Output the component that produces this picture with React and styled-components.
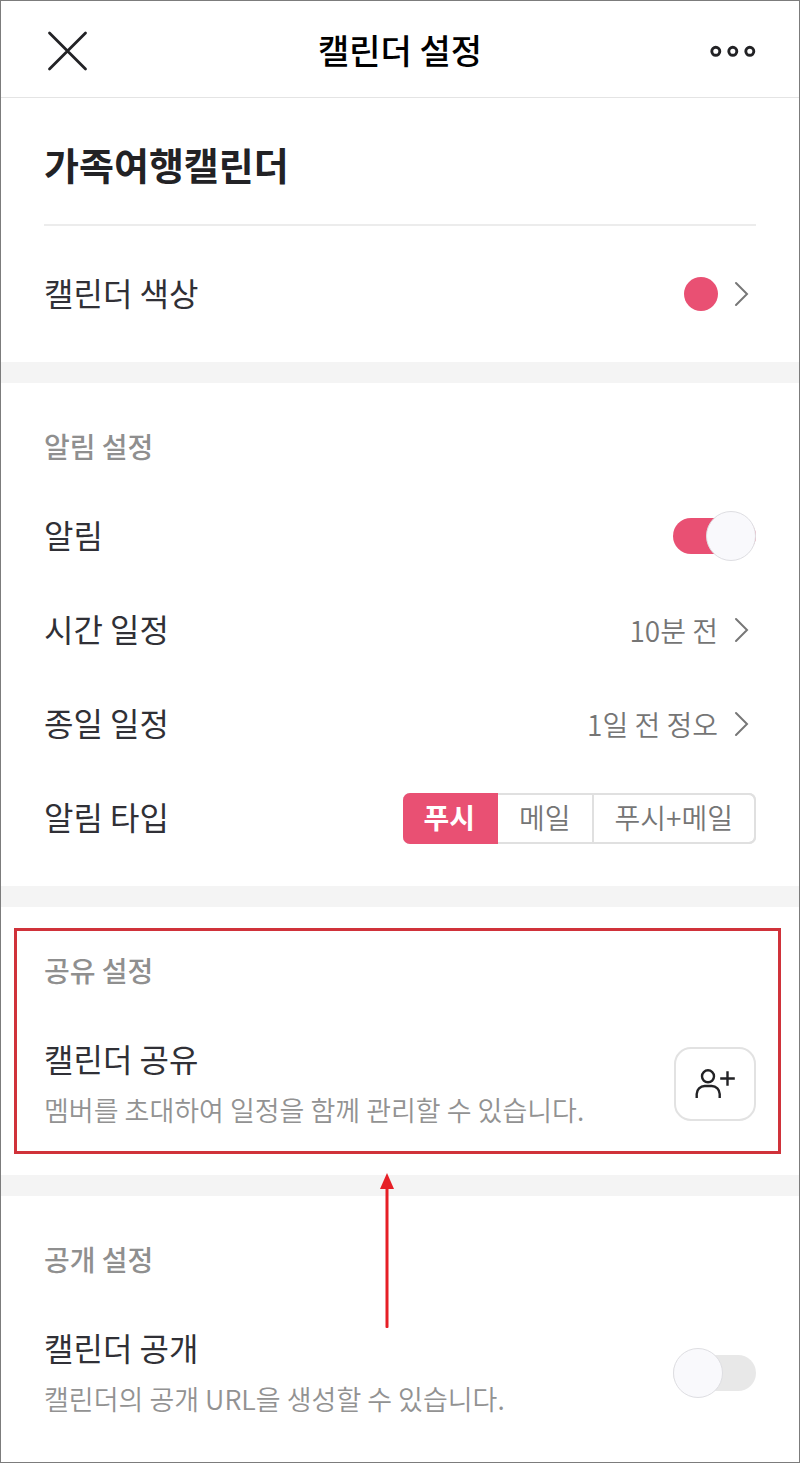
import React, { useState } from 'react';
import styled, { createGlobalStyle } from 'styled-components';

// --- STYLES ---

const GlobalStyle = createGlobalStyle`
    *, *::before {
        box-sizing: border-box;
    }
    body {
        margin: 0;
        background-color: #ffffff;
        font-family: 'Noto Sans CJK KR', 'Noto Sans', sans-serif;
    }
    button, input {
        font-family: inherit;
    }
`;

const Screen = styled.div`
    min-height: 100vh;
    border: 1px solid #7c7c7c;
    background-color: #ffffff;
`;

const Header = styled.header`
    display: grid;
    grid-template-columns: 1fr auto 1fr;
    align-items: center;
    height: 97px;
    padding: 4px 43px 0;
    border-bottom: 1px solid #e4e4e4;
`;

const HeaderTitle = styled.h1`
    margin: 0;
    padding-bottom: 2px;
    font-size: 34px;
    line-height: 48px;
    font-weight: 500;
    color: #000000;
`;

const IconButton = styled.button`
    display: flex;
    justify-self: ${(props) => props.$align};
    padding: 0;
    border: none;
    background: none;
    cursor: pointer;
`;

const NameBlock = styled.div`
    margin: 0 43px;
    padding: 38px 0 32px;
    border-bottom: 2px solid #ececec;
`;

const CalendarName = styled.h2`
    margin: 0;
    font-size: 38px;
    line-height: 56px;
    font-weight: 700;
    color: #222225;
`;

const Section = styled.section`
    position: relative;
    padding: 43px 43px 21px;
    border-top: 21px solid #f4f4f4;

    &:last-child {
        padding-bottom: 16px;
    }
`;

const SectionTitle = styled.h3`
    margin: 0 0 23px;
    font-size: 28px;
    line-height: 40px;
    font-weight: 500;
    color: #8f8f8f;
`;

const Row = styled.div`
    display: flex;
    align-items: center;
    justify-content: space-between;
    min-height: 94px;
`;

const ColorRow = styled(Row)`
    min-height: 136px;
    margin: 0 43px;
`;

const TallRow = styled(Row)`
    min-height: 100px;
    margin: 44px 0 20px;
`;

const RowLabel = styled.span`
    padding-bottom: 4px;
    font-size: 32px;
    line-height: 48px;
    color: #303036;
`;

const TextBlock = styled.div`
    display: flex;
    flex-direction: column;
    gap: 4px;
    padding-bottom: 4px;
`;

const Description = styled.span`
    font-size: 27px;
    line-height: 40px;
    font-weight: 350;
    color: #929292;
`;

const ValueButton = styled.button`
    display: flex;
    align-items: center;
    gap: 16px;
    padding: 0 7px 0 0;
    border: none;
    background: none;
    font-size: 28px;
    line-height: 40px;
    font-weight: 350;
    color: #757575;
    cursor: pointer;
`;

const ColorDot = styled.span`
    width: 34px;
    height: 34px;
    border-radius: 50%;
    background-color: #e95073;
`;

const Switch = styled.input`
    appearance: none;
    display: flex;
    align-items: center;
    justify-content: flex-start;
    flex-shrink: 0;
    width: 83px;
    height: 36px;
    margin: 0;
    border-radius: 18px;
    background-color: #e8e8e8;
    cursor: pointer;

    &::before {
        content: '';
        flex-shrink: 0;
        width: 50px;
        height: 50px;
        border: 1px solid #dedee2;
        border-radius: 50%;
        background-color: #f9f9fc;
    }
    &:checked {
        justify-content: flex-end;
        background-color: #e95073;
    }
`;

const Segments = styled.div`
    display: flex;
    border: 2px solid #e0e0e0;
    border-radius: 7px;
`;

const Segment = styled.label`
    margin: -2px 0;
    padding: 4px 21px 7px;
    border: 2px solid #e0e0e0;
    border-left-width: 0;
    font-size: 28px;
    line-height: 36px;
    font-weight: 350;
    color: #757575;
    cursor: pointer;

    &:first-child {
        margin-left: -2px;
        border-radius: 7px 0 0 7px;
    }
    &:last-child {
        margin-right: -2px;
        border-radius: 0 7px 7px 0;
    }
    &:has(input:checked) {
        border-color: #e95073;
        background-color: #e95073;
        font-weight: 700;
        color: #ffffff;
    }
`;

const SegmentRadio = styled.input`
    appearance: none;
    width: 0;
    height: 0;
    margin: 0;
    float: left;
`;

const InviteButton = styled.button`
    display: flex;
    align-items: center;
    justify-content: center;
    flex-shrink: 0;
    width: 82px;
    height: 74px;
    padding: 0;
    border: 2px solid #e2e2e2;
    border-radius: 17px;
    background-color: #ffffff;
    cursor: pointer;
`;

const Highlight = styled.div`
    position: absolute;
    inset: 21px 18px 21px 13px;
    border: 3px solid #d0323a;
    pointer-events: none;
`;

const Pointer = styled.svg`
    position: absolute;
    top: 100%;
    left: calc(50% - 20px);
    z-index: 1;
    margin-top: -2px;
    pointer-events: none;
`;

// --- ICONS ---

const CloseIcon = () => (
    <svg width="46" height="46" viewBox="0 0 46 46" fill="none" stroke="#222225" strokeWidth="2.8" strokeLinecap="round">
        <path d="M5.5 5L41.5 41M41.5 5L5.5 41" />
    </svg>
);

const MoreIcon = () => (
    <svg width="46" height="12" viewBox="0 0 46 12" fill="none" stroke="#222225" strokeWidth="2.9">
        <circle cx="5.8" cy="6.3" r="4" />
        <circle cx="22.8" cy="6.3" r="4" />
        <circle cx="39.8" cy="6.3" r="4" />
    </svg>
);

const ChevronIcon = () => (
    <svg width="15" height="26" viewBox="0 0 15 26" fill="none" stroke="#777777" strokeWidth="2" strokeLinecap="round">
        <path d="M2 2L13 13L2 24" />
    </svg>
);

const InviteIcon = () => (
    <svg width="40" height="30" viewBox="0 0 40 30" fill="none" stroke="#222225" strokeWidth="2.4">
        <circle cx="13" cy="7.3" r="6" />
        <path d="M1.7 29V25A8 8 0 0 1 9.7 17H16.7A8 8 0 0 1 24.7 25V29" />
        <path d="M25.2 9.5H39.8M32.5 2.2V16.8" />
    </svg>
);

// --- DATA ---

const alarmTypes = [
    { id: 'push', label: '푸시' },
    { id: 'mail', label: '메일' },
    { id: 'both', label: '푸시+메일' },
];

const alarmTimes = [
    { id: 'timed', label: '시간 일정', value: '10분 전' },
    { id: 'allday', label: '종일 일정', value: '1일 전 정오' },
];

// --- MAIN COMPONENT ---

export default function App() {
    const [alarm, setAlarm] = useState(true);
    const [alarmType, setAlarmType] = useState('push');
    const [isPublic, setIsPublic] = useState(false);

    return (
        <Screen>
            <GlobalStyle />
            <Header>
                <IconButton $align="start" aria-label="닫기">
                    <CloseIcon />
                </IconButton>
                <HeaderTitle>캘린더 설정</HeaderTitle>
                <IconButton $align="end" aria-label="더보기">
                    <MoreIcon />
                </IconButton>
            </Header>

            <NameBlock>
                <CalendarName>가족여행캘린더</CalendarName>
            </NameBlock>
            <ColorRow>
                <RowLabel id="color-label">캘린더 색상</RowLabel>
                <ValueButton aria-labelledby="color-label">
                    <ColorDot />
                    <ChevronIcon />
                </ValueButton>
            </ColorRow>

            <Section>
                <SectionTitle>알림 설정</SectionTitle>
                <Row>
                    <RowLabel as="label" htmlFor="alarm">알림</RowLabel>
                    <Switch
                        id="alarm"
                        type="checkbox"
                        checked={alarm}
                        onChange={(e) => setAlarm(e.target.checked)}
                    />
                </Row>
                {alarmTimes.map((item) => (
                    <Row key={item.id}>
                        <RowLabel as="label" htmlFor={item.id}>{item.label}</RowLabel>
                        <ValueButton id={item.id}>
                            {item.value}
                            <ChevronIcon />
                        </ValueButton>
                    </Row>
                ))}
                <Row>
                    <RowLabel id="type-label">알림 타입</RowLabel>
                    <Segments role="radiogroup" aria-labelledby="type-label">
                        {alarmTypes.map((type) => (
                            <Segment key={type.id}>
                                <SegmentRadio
                                    type="radio"
                                    name="alarmType"
                                    checked={alarmType === type.id}
                                    onChange={() => setAlarmType(type.id)}
                                />
                                {type.label}
                            </Segment>
                        ))}
                    </Segments>
                </Row>
            </Section>

            <Section>
                <SectionTitle>공유 설정</SectionTitle>
                <TallRow>
                    <TextBlock>
                        <RowLabel>캘린더 공유</RowLabel>
                        <Description>멤버를 초대하여 일정을 함께 관리할 수 있습니다.</Description>
                    </TextBlock>
                    <InviteButton aria-label="멤버 초대">
                        <InviteIcon />
                    </InviteButton>
                </TallRow>
                <Highlight />
                <Pointer width="14" height="155" viewBox="0 0 14 155" fill="#e61f26">
                    <path d="M7 0L14 16H0Z" />
                    <rect x="5.5" y="15" width="3" height="140" rx="1" />
                </Pointer>
            </Section>

            <Section>
                <SectionTitle>공개 설정</SectionTitle>
                <TallRow>
                    <TextBlock>
                        <RowLabel as="label" htmlFor="public">캘린더 공개</RowLabel>
                        <Description>캘린더의 공개 URL을 생성할 수 있습니다.</Description>
                    </TextBlock>
                    <Switch
                        id="public"
                        type="checkbox"
                        checked={isPublic}
                        onChange={(e) => setIsPublic(e.target.checked)}
                    />
                </TallRow>
            </Section>
        </Screen>
    );
}
